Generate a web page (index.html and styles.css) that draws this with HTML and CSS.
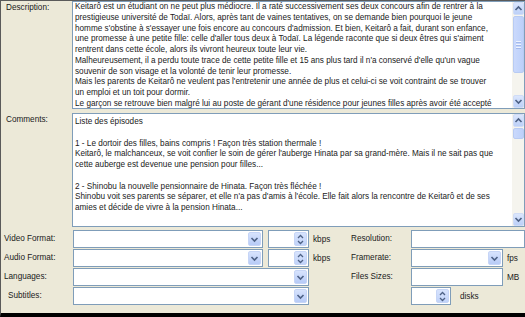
FILE: index.html
```html
<!DOCTYPE html>
<html lang="fr">
<head>
    <meta charset="UTF-8">
    <title>Infos</title>
    <link rel="stylesheet" href="styles.css">
</head>
<body>
<div class="frame">
    <div class="memo-row">
        <div class="label">Description:</div>
        <div class="memo desc">
            <div class="memo-text">
                <div>Keitarô est un étudiant on ne peut plus médiocre. Il a raté successivement ses deux concours afin de rentrer à la</div>
                <div>prestigieuse université de Todaï. Alors, après tant de vaines tentatives, on se demande bien pourquoi le jeune</div>
                <div>homme s'obstine à s'essayer une fois encore au concours d'admission. Et bien, Keitarô a fait, durant son enfance,</div>
                <div>une promesse à une petite fille: celle d'aller tous deux à Todaï. La légende raconte que si deux êtres qui s'aiment</div>
                <div>rentrent dans cette école, alors ils vivront heureux toute leur vie.</div>
                <div>Malheureusement, il a perdu toute trace de cette petite fille et 15 ans plus tard il n'a conservé d'elle qu'un vague</div>
                <div>souvenir de son visage et la volonté de tenir leur promesse.</div>
                <div>Mais les parents de Keitarô ne veulent pas l'entretenir une année de plus et celui-ci se voit contraint de se trouver</div>
                <div>un emploi et un toit pour dormir.</div>
                <div>Le garçon se retrouve bien malgré lui au poste de gérant d'une résidence pour jeunes filles après avoir été accepté</div>
            </div>
            <div class="vscroll">
                <div class="sb-btn"><svg width="9" height="7" viewBox="0 0 9 7"><path d="M1.5 5 L4.5 2 L7.5 5" fill="none" stroke="#4d6185" stroke-width="1.6"/></svg></div>
                <div class="sb-track">
                    <div class="sb-thumb big"><span></span><span></span><span></span></div>
                </div>
                <div class="sb-btn"><svg width="9" height="7" viewBox="0 0 9 7"><path d="M1.5 2 L4.5 5 L7.5 2" fill="none" stroke="#4d6185" stroke-width="1.6"/></svg></div>
            </div>
        </div>
    </div>

    <div class="memo-row comm-row">
        <div class="label">Comments:</div>
        <div class="memo comm">
            <div class="memo-text">
                <div>Liste des épisodes</div>
                <div>&nbsp;</div>
                <div>1 - Le dortoir des filles, bains compris ! Façon très station thermale !</div>
                <div>Keitarô, le malchanceux, se voit confier le soin de gérer l'auberge Hinata par sa grand-mère. Mais il ne sait pas que</div>
                <div>cette auberge est devenue une pension pour filles...</div>
                <div>&nbsp;</div>
                <div>2 - Shinobu la nouvelle pensionnaire de Hinata. Façon très fléchée !</div>
                <div>Shinobu voit ses parents se séparer, et elle n'a pas d'amis à l'école. Elle fait alors la rencontre de Keitarô et de ses</div>
                <div>amies et décide de vivre à la pension Hinata...</div>
            </div>
            <div class="vscroll">
                <div class="sb-btn"><svg width="9" height="7" viewBox="0 0 9 7"><path d="M1.5 5 L4.5 2 L7.5 5" fill="none" stroke="#4d6185" stroke-width="1.6"/></svg></div>
                <div class="sb-track">
                    <div class="sb-thumb small"></div>
                </div>
                <div class="sb-btn"><svg width="9" height="7" viewBox="0 0 9 7"><path d="M1.5 2 L4.5 5 L7.5 2" fill="none" stroke="#4d6185" stroke-width="1.6"/></svg></div>
            </div>
        </div>
    </div>

    <div class="fields">
        <!-- row 1 -->
        <div class="label f-label r1">Video Format:</div>
        <div class="combo c-sel r1"><div class="field"></div><div class="drop"><svg width="9" height="7" viewBox="0 0 9 7"><path d="M1.5 2 L4.5 5 L7.5 2" fill="none" stroke="#4d6185" stroke-width="1.6"/></svg></div></div>
        <div class="spin c-spin r1"><div class="field"></div><div class="spin-btns"><svg width="7" height="5" viewBox="0 0 7 5"><path d="M1 4 L3.5 1.5 L6 4" fill="none" stroke="#4d6185" stroke-width="1.3"/></svg><svg width="7" height="5" viewBox="0 0 7 5"><path d="M1 1 L3.5 3.5 L6 1" fill="none" stroke="#4d6185" stroke-width="1.3"/></svg></div></div>
        <div class="unit c-unit r1">kbps</div>
        <div class="label r-label r1">Resolution:</div>
        <div class="input c-ctrl r1"></div>

        <!-- row 2 -->
        <div class="label f-label r2">Audio Format:</div>
        <div class="combo c-sel r2"><div class="field"></div><div class="drop"><svg width="9" height="7" viewBox="0 0 9 7"><path d="M1.5 2 L4.5 5 L7.5 2" fill="none" stroke="#4d6185" stroke-width="1.6"/></svg></div></div>
        <div class="spin c-spin r2"><div class="field"></div><div class="spin-btns"><svg width="7" height="5" viewBox="0 0 7 5"><path d="M1 4 L3.5 1.5 L6 4" fill="none" stroke="#4d6185" stroke-width="1.3"/></svg><svg width="7" height="5" viewBox="0 0 7 5"><path d="M1 1 L3.5 3.5 L6 1" fill="none" stroke="#4d6185" stroke-width="1.3"/></svg></div></div>
        <div class="unit c-unit r2">kbps</div>
        <div class="label r-label r2">Framerate:</div>
        <div class="ctrl-unit c-ctrl r2">
            <div class="combo short"><div class="field"></div><div class="drop"><svg width="9" height="7" viewBox="0 0 9 7"><path d="M1.5 2 L4.5 5 L7.5 2" fill="none" stroke="#4d6185" stroke-width="1.6"/></svg></div></div>
            <span class="unit">fps</span>
        </div>

        <!-- row 3 -->
        <div class="label f-label r3">Languages:</div>
        <div class="combo c-wide r3"><div class="field"></div><div class="drop"><svg width="9" height="7" viewBox="0 0 9 7"><path d="M1.5 2 L4.5 5 L7.5 2" fill="none" stroke="#4d6185" stroke-width="1.6"/></svg></div></div>
        <div class="label r-label r3">Files Sizes:</div>
        <div class="ctrl-unit c-ctrl r3">
            <div class="input short"></div>
            <span class="unit">MB</span>
        </div>

        <!-- row 4 -->
        <div class="label f-label sub r4">Subtitles:</div>
        <div class="combo c-wide r4"><div class="field"></div><div class="drop"><svg width="9" height="7" viewBox="0 0 9 7"><path d="M1.5 2 L4.5 5 L7.5 2" fill="none" stroke="#4d6185" stroke-width="1.6"/></svg></div></div>
        <div class="ctrl-unit disks c-ctrl r4">
            <div class="spin"><div class="field"></div><div class="spin-btns"><svg width="7" height="5" viewBox="0 0 7 5"><path d="M1 4 L3.5 1.5 L6 4" fill="none" stroke="#4d6185" stroke-width="1.3"/></svg><svg width="7" height="5" viewBox="0 0 7 5"><path d="M1 1 L3.5 3.5 L6 1" fill="none" stroke="#4d6185" stroke-width="1.3"/></svg></div></div>
            <span class="unit">disks</span>
        </div>
    </div>
</div>
</body>
</html>
```

FILE: styles.css
```css
body {
    margin: 0;
    font-family: "Liberation Sans", Arial, sans-serif;
    font-size: 8.2px;
    color: #1a1a1a;
}
.frame {
    width: 525px;
    height: 317px;
    box-sizing: border-box;
    background-color: #ece9d8;
    border-top: 1px solid #5a5a5a;
    border-left: 1px solid #5a5a5a;
    border-bottom: 4px solid #000;
    overflow: hidden;
}
.memo-row {
    display: flex;
}
.comm-row {
    margin-top: 4px;
}
.label {
    width: 71px;
    box-sizing: border-box;
    padding-left: 5px;
    line-height: 12px;
    white-space: nowrap;
}
.memo-row .label {
    padding-top: 1px;
}
.memo {
    flex: 1;
    display: flex;
    border: 1px solid #7f9db9;
    background-color: #fff;
}
.memo.desc {
    height: 108px;
    box-sizing: border-box;
}
.memo.comm {
    height: 114px;
    box-sizing: border-box;
}
.memo-text {
    flex: 1;
    overflow: hidden;
    padding: 0 2px;
    line-height: 10.75px;
    white-space: nowrap;
}
.comm .memo-text {
    padding-top: 3px;
}
.vscroll {
    width: 12px;
    display: flex;
    flex-direction: column;
    background-color: #f5f4ee;
}
.sb-btn {
    height: 11px;
    margin: 0 0 0 1px;
    border: 1px solid #d0dcf6;
    border-radius: 2px;
    background: linear-gradient(#dbe6fd, #bcd0f8);
    display: flex;
    align-items: center;
    justify-content: center;
}
.sb-track {
    flex: 1;
    padding-top: 1px;
}
.sb-thumb {
    margin-left: 1px;
    border: 1px solid #b8cbf3;
    border-radius: 2px;
    background: linear-gradient(90deg, #cad9fc, #bcd0fa);
    display: flex;
    flex-direction: column;
    align-items: center;
    justify-content: center;
    gap: 1px;
}
.sb-thumb.big {
    height: 55px;
}
.sb-thumb.small {
    height: 9px;
}
.sb-thumb span {
    width: 5px;
    height: 1px;
    background-color: #eef3fe;
    border-bottom: 1px solid #a3b9ec;
}
.fields {
    margin-top: 3px;
    display: grid;
    grid-template-columns: 72px 190px 5px 41px 41px 61px 1fr;
    grid-template-rows: repeat(4, 18px);
    row-gap: 1px;
    align-items: center;
}
.f-label { grid-column: 1; padding-left: 3px; }
.f-label.sub { padding-left: 7px; }
.r-label { grid-column: 6; padding-left: 1px; }
.c-sel { grid-column: 2; }
.c-wide { grid-column: 2 / 5; }
.c-spin { grid-column: 4; }
.c-unit { grid-column: 5; padding-left: 4px; }
.c-ctrl { grid-column: 7; }
.r1 { grid-row: 1; }
.r2 { grid-row: 2; }
.r3 { grid-row: 3; }
.r4 { grid-row: 4; }
.combo, .spin, .input {
    height: 18px;
    box-sizing: border-box;
    border: 1px solid #7f9db9;
    background-color: #fff;
    display: flex;
}
.field {
    flex: 1;
}
.drop {
    width: 11px;
    margin: 1px;
    border: 1px solid #c6d5f6;
    border-radius: 2px;
    background: linear-gradient(#d7e3fd, #b7cbf7);
    display: flex;
    align-items: center;
    justify-content: center;
}
.spin-btns {
    width: 11px;
    margin: 1px;
    border: 1px solid #c6d5f6;
    border-radius: 2px;
    background: linear-gradient(#d7e3fd, #c1d3f9);
    display: flex;
    flex-direction: column;
    align-items: center;
    justify-content: center;
    gap: 1px;
}
.unit {
    white-space: nowrap;
}
.ctrl-unit {
    display: flex;
    align-items: center;
    gap: 4px;
}
.combo.short, .input.short {
    width: 92px;
}
.disks {
    gap: 9px;
}
.disks .spin {
    width: 40px;
}
```
